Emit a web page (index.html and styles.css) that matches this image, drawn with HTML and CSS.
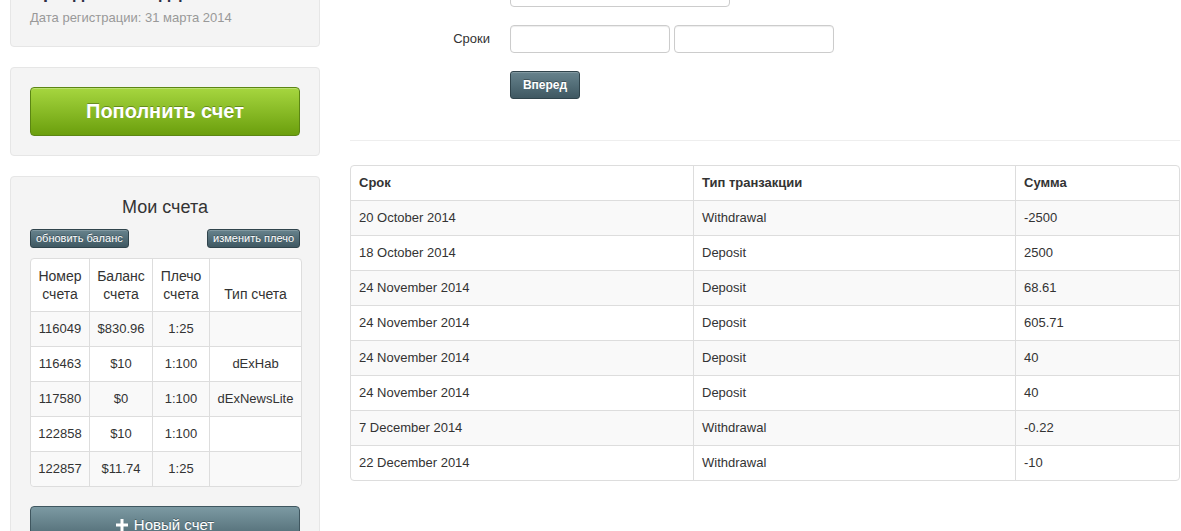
FILE: index.html
```html
<!DOCTYPE html>
<html lang="ru">
<head>
<meta charset="utf-8">
<title>Личный кабинет</title>
<link rel="stylesheet" href="styles.css">
</head>
<body>
<div class="page">
  <aside class="sidebar">
    <div class="well">
      <h4 class="user-name">Аркадий Молодцов</h4>
      <div class="reg-date">Дата регистрации: 31 марта 2014</div>
    </div>

    <div class="well">
      <button class="btn btn-green">Пополнить счет</button>
    </div>

    <div class="well">
      <h3 class="well-title">Мои счета</h3>
      <div class="tools">
        <button class="btn btn-slate btn-xs">обновить баланс</button>
        <button class="btn btn-slate btn-xs">изменить плечо</button>
      </div>
      <table class="grid accounts">
        <colgroup>
          <col class="c-num"><col class="c-bal"><col class="c-lev"><col>
        </colgroup>
        <thead>
          <tr><th>Номер счета</th><th>Баланс счета</th><th>Плечо счета</th><th>Тип счета</th></tr>
        </thead>
        <tbody>
          <tr><td>116049</td><td>$830.96</td><td>1:25</td><td></td></tr>
          <tr><td>116463</td><td>$10</td><td>1:100</td><td>dExHab</td></tr>
          <tr><td>117580</td><td>$0</td><td>1:100</td><td>dExNewsLite</td></tr>
          <tr><td>122858</td><td>$10</td><td>1:100</td><td></td></tr>
          <tr><td>122857</td><td>$11.74</td><td>1:25</td><td></td></tr>
        </tbody>
      </table>
      <button class="btn btn-new">
        <svg class="plus" width="12" height="12" viewBox="0 0 12 12" aria-hidden="true">
          <path d="M4.5 0h3v4.5H12v3H7.5V12h-3V7.5H0v-3h4.5z" fill="#fff"/>
        </svg>
        Новый счет
      </button>
    </div>
  </aside>

  <main class="content">
    <form class="filter">
      <label class="f-label"></label>
      <div class="f-controls"><input class="input input-wide" type="text"></div>

      <label class="f-label">Сроки</label>
      <div class="f-controls">
        <input class="input input-half" type="text">
        <input class="input input-half" type="text">
      </div>

      <span></span>
      <div class="f-controls"><button type="button" class="btn btn-slate btn-go">Вперед</button></div>
    </form>

    <hr class="divider">

    <table class="grid history">
      <colgroup>
        <col class="h-date"><col class="h-type"><col>
      </colgroup>
      <thead>
        <tr><th>Срок</th><th>Тип транзакции</th><th>Сумма</th></tr>
      </thead>
      <tbody>
        <tr><td>20 October 2014</td><td>Withdrawal</td><td>-2500</td></tr>
        <tr><td>18 October 2014</td><td>Deposit</td><td>2500</td></tr>
        <tr><td>24 November 2014</td><td>Deposit</td><td>68.61</td></tr>
        <tr><td>24 November 2014</td><td>Deposit</td><td>605.71</td></tr>
        <tr><td>24 November 2014</td><td>Deposit</td><td>40</td></tr>
        <tr><td>24 November 2014</td><td>Deposit</td><td>40</td></tr>
        <tr><td>7 December 2014</td><td>Withdrawal</td><td>-0.22</td></tr>
        <tr><td>22 December 2014</td><td>Withdrawal</td><td>-10</td></tr>
      </tbody>
    </table>
  </main>
</div>
</body>
</html>
```

FILE: styles.css
```css
* { box-sizing: border-box; }

html, body { margin: 0; background: #fff; }

body {
  font-family: "Liberation Sans", Arial, Helvetica, sans-serif;
  font-size: 13px;
  line-height: 1.42857;
  color: #333;
  overflow: hidden;
}

.page {
  display: flex;
  gap: 30px;
  padding: 0 1px 0 10px;
  margin-top: -38px;
}

/* ---------- sidebar ---------- */
.sidebar {
  width: 310px;
  flex: none;
}

.well {
  background: #f4f4f4;
  border: 1px solid #e6e6e6;
  border-radius: 4px;
  padding: 19px;
  margin-bottom: 20px;
}

.user-name {
  margin: -1px 0 5px;
  font-size: 18px;
  line-height: 22px;
  font-weight: bold;
  color: #2c2f45;
}

.reg-date {
  color: #999;
  line-height: 19px;
}

.btn {
  display: block;
  font-family: inherit;
  color: #fff;
  cursor: pointer;
  border-radius: 4px;
  text-shadow: 0 -1px 0 rgba(0, 0, 0, .3);
}

.btn-green {
  width: 100%;
  height: 49px;
  padding: 0;
  font-size: 20px;
  font-weight: bold;
  background: linear-gradient(#a6d63f, #6b9f0d);
  border: 1px solid #5c8613;
  box-shadow: inset 0 1px 0 rgba(255, 255, 255, .25);
}

.well-title {
  margin: 0 0 11px;
  font-size: 18px;
  line-height: 22px;
  font-weight: normal;
  text-align: center;
  color: #333;
}

.tools {
  display: flex;
  justify-content: space-between;
  margin-bottom: 10px;
}

.btn-slate {
  background: linear-gradient(#67838d, #3f5862);
  border: 1px solid #30444c;
  box-shadow: inset 0 1px 0 rgba(255, 255, 255, .18);
}

.btn-xs {
  height: 19px;
  padding: 0 5px;
  font-size: 11px;
  line-height: 17px;
  border-radius: 3px;
}

/* ---------- tables ---------- */
.grid {
  border-collapse: separate;
  border-spacing: 0;
  table-layout: fixed;
  background: #fff;
  border: 1px solid #ddd;
  border-radius: 4px;
}

.grid th,
.grid td {
  padding: 8px;
  line-height: 18px;
  border-left: 1px solid #ddd;
  border-top: 1px solid #ddd;
}

.grid th:first-child,
.grid td:first-child { border-left: 0; }

.grid thead th { border-top: 0; vertical-align: bottom; }

.grid tbody tr:nth-child(odd) td { background: #f9f9f9; }

.grid tbody tr:last-child td:first-child { border-bottom-left-radius: 4px; }
.grid tbody tr:last-child td:last-child { border-bottom-right-radius: 4px; }

.accounts {
  width: 272px;
  margin-bottom: 19px;
}

.accounts th,
.accounts td {
  text-align: center;
  font-weight: normal;
  padding: 8px 3px;
}

.accounts th { font-size: 14px; }

.c-num { width: 58px; }
.c-bal { width: 63px; }
.c-lev { width: 57px; }

.btn-new {
  width: 100%;
  height: 36px;
  display: flex;
  align-items: center;
  justify-content: center;
  gap: 6px;
  padding: 0;
  font-size: 15px;
  background: linear-gradient(#7c9aa3, #4c6670);
  border: 1px solid #3f565f;
}

.plus { display: block; margin-top: 1px; }

/* ---------- content ---------- */
.content {
  flex: 1;
  min-width: 0;
  padding-top: 17px;
}

.filter {
  display: grid;
  grid-template-columns: 140px 1fr;
  column-gap: 20px;
  row-gap: 18px;
  align-items: center;
}

.f-label {
  text-align: right;
  color: #333;
}

.f-controls {
  display: flex;
  gap: 4px;
}

.input {
  height: 28px;
  padding: 4px 8px;
  font: inherit;
  border: 1px solid #ccc;
  border-radius: 4px;
  background: #fff;
  box-shadow: inset 0 1px 1px rgba(0, 0, 0, .075);
}

.input-wide { width: 220px; }
.input-half { width: 160px; }

.btn-go {
  width: 70px;
  height: 28px;
  padding: 0;
  font-size: 12px;
  font-weight: bold;
  border-radius: 3px;
}

.divider {
  margin: 41px 0 24px;
  border: 0;
  border-top: 1px solid #eee;
}

.history {
  width: 830px;
}

.history th { text-align: left; font-weight: bold; }

.h-date { width: 342px; }
.h-type { width: 322px; }
```
